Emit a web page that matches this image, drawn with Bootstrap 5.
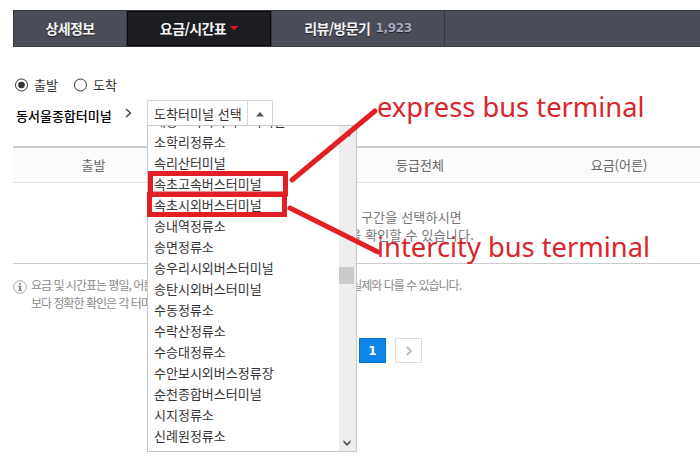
<!DOCTYPE html>
<html lang="ko">
<head>
<meta charset="utf-8">
<meta name="viewport" content="width=device-width, initial-scale=1">
<title>요금/시간표</title>
<link href="https://cdn.jsdelivr.net/npm/bootstrap@5.3.0/dist/css/bootstrap.min.css" rel="stylesheet">
<style>
body{width:700px;height:458px;overflow:hidden;background:#fff;font:13px/18px "Noto Sans CJK KR",sans-serif;color:#333}
.page{padding:10px 0 0 13px;height:458px}
.tabs{height:37px;background:#4b4d59;border:1px solid #363840;border-right:0}
.tabs .tab{color:#f5f5f5;font-weight:600;font-size:14px;letter-spacing:-.6px;border-right:1px solid #36373f;padding-bottom:1px;text-shadow:0 1px 1px #222}
.tabs .tab.current{background:#1d1e23;box-shadow:inset 0 0 0 1px #08080a}
.tabs .count{font:bold 12px "DejaVu Sans",sans-serif;letter-spacing:-.3px;color:#a5aabd;margin-left:5px}
.t1{width:113px}.t2{width:145px}.t3{width:173px}
.choice{height:22px;margin-top:27px}
.choice svg{margin-right:4px}
.choice .first{margin-left:1px}
.choice .second{margin-left:15px}
.route{height:28px;margin-top:4px}
.from{font-weight:500;color:#000;width:97px;margin-left:3px;font-size:13px;padding-top:7px}
.picker{width:126px;height:28px;border:1px solid #d3d8d8;margin-left:14px}
.picker .value{padding:4px 0 0 6px;letter-spacing:.05px}
.picker .caret{width:25px;border-left:1px solid #d3d8d8}
.heads{height:37px;margin-top:18px;background:#fbfbfb;border-top:2px solid #ccc;border-bottom:1px solid #e2e2e2;color:#666}
.heads span{flex:none}
.c1{width:161px}.c2{width:168px}.c3{width:156px}.c4{width:202px;padding-left:40px}
.message{height:81px;border-bottom:1px solid #ccc;color:#777;line-height:18px;padding-top:25px}
.message .l1{width:449px;letter-spacing:.2px}
.message .l2{width:461px;letter-spacing:.2px}
.note{font-size:12px;letter-spacing:-1px;color:#8a8a8a;line-height:18px;margin-top:12px;width:448px}
.pager{margin:26px 0 0 346px}
.pager .pg{width:27px;height:25px;border:1px solid #ddd}
.pager .pg + .pg{margin-left:9px}
.pager .on{background:#0d86e8;border-color:#0a70c5;color:#fff;font:bold 12px "DejaVu Sans",sans-serif}
.options{left:147px;top:125px;width:210px;height:327px;background:#fff;border:1px solid #c4c8c8;overflow:hidden}
.options .names{margin-top:-16px;padding-left:6px;line-height:21px;color:#333}
.scroll{width:17px;height:100%;background:#eee}
.thumb{height:17px;width:15px;background:#cbcbcb;margin-top:141px}
.marks{left:0;top:0}
.label-red{left:377px;font:27.3px/34px "Noto Sans",sans-serif;color:#d9252b;white-space:nowrap}
.label-red.upper{top:90px}
.label-red.lower{top:230px}
</style>
<script src="https://cdn.jsdelivr.net/npm/bootstrap@5.3.0/dist/js/bootstrap.bundle.min.js"></script>
</head>
<body>
<main class="page position-relative">
<nav class="tabs d-flex">
<div class="tab t1 d-flex align-items-center justify-content-center">상세정보</div>
<div class="tab current t2 d-flex align-items-center justify-content-center">요금/시간표<svg class="ms-1" width="8" height="5"><path d="M0 0h8L4 4.500z" fill="#e3141b"/></svg></div>
<div class="tab t3 d-flex align-items-center justify-content-center">리뷰/방문기<span class="count">1,923</span></div>
</nav>
<div class="choice d-flex align-items-center">
<svg class="first" width="16" height="14" viewBox="0 0 16 14"><circle cx="7.500" cy="7" r="6" fill="#fff" stroke="#333"/><circle cx="7.500" cy="7" r="3.300" fill="#333"/></svg><span>출발</span>
<svg class="second" width="16" height="14" viewBox="0 0 16 14"><circle cx="7.500" cy="7" r="6" fill="#fff" stroke="#333"/></svg><span>도착</span>
</div>
<div class="route d-flex">
<div class="from text-nowrap">동서울종합터미널</div>
<svg class="ms-2 mt-2" width="12" height="10"><path d="M5 1l4.500 4L5 9" fill="none" stroke="#333" stroke-width="1.300"/></svg>
<div class="picker d-flex"><span class="value flex-grow-1 text-nowrap">도착터미널 선택</span><span class="caret d-flex align-items-center justify-content-center"><svg width="8" height="5"><path d="M0 4.500h8L4 0z" fill="#555"/></svg></span></div>
</div>
<div class="heads d-flex align-items-center text-center"><span class="c1">출발</span><span class="c2"></span><span class="c3">등급전체</span><span class="c4">요금(어른)</span></div>
<div class="message text-end"><div class="l1">구간을 선택하시면</div><div class="l2">요금을 확인할 수 있습니다.</div></div>
<div class="note d-flex">
<svg width="14" height="14" viewBox="0 0 14 14" class="flex-shrink-0 mt-1"><circle cx="7" cy="7" r="6.300" fill="#fff" stroke="#aaa"/><path d="M6.200 3h1.800v1.500H6.200zM5.300 5.800H8v4h1v1H5.200v-1h1.100v-3h-1z" fill="#777"/></svg>
<div class="ps-1 flex-grow-1"><div class="d-flex justify-content-between text-nowrap"><span>요금 및 시간표는 평일, 어른</span><span>실제와 다를 수 있습니다.</span></div><div>보다 정확한 확인은 각 터미널</div></div>
</div>
<div class="pager d-flex"><div class="pg on d-flex align-items-center justify-content-center">1</div><div class="pg d-flex align-items-center justify-content-center"><svg width="8" height="10"><path d="M2 1l4 4-4 4" fill="none" stroke="#bbb" stroke-width="1.800"/></svg></div></div>

<div class="options position-absolute d-flex">
<div class="names flex-grow-1 text-nowrap"><div>세종고속시외버스터미널</div><div>소학리정류소</div><div>속리산터미널</div><div>속초고속버스터미널</div><div>속초시외버스터미널</div><div>송내역정류소</div><div>송면정류소</div><div>송우리시외버스터미널</div><div>송탄시외버스터미널</div><div>수동정류소</div><div>수락산정류소</div><div>수승대정류소</div><div>수안보시외버스정류장</div><div>순천종합버스터미널</div><div>시지정류소</div><div>신례원정류소</div></div>
<div class="scroll d-flex flex-column justify-content-between"><div class="thumb"></div><svg class="mb-1 ms-1" width="8" height="8"><path d="M.5 1L4 4.500 7.500 1v2.500L4 7 .5 3.500z" fill="#555"/></svg></div>
</div>
<svg class="marks position-absolute" width="700" height="458" fill="none" stroke="#e31f26">
<path d="M346 134l4-3v6z" fill="#444" stroke="none"/>
<rect x="150.500" y="173.500" width="135" height="20.500" stroke-width="5"/>
<rect x="149.500" y="194.500" width="135" height="20" stroke-width="5"/>
<path d="M292 180L375 111M290 208l88 44" stroke-width="5" stroke-linecap="round"/>
</svg>
<div class="label-red upper position-absolute">express bus terminal</div>
<div class="label-red lower position-absolute">intercity bus terminal</div>
</main>
</body>
</html>
